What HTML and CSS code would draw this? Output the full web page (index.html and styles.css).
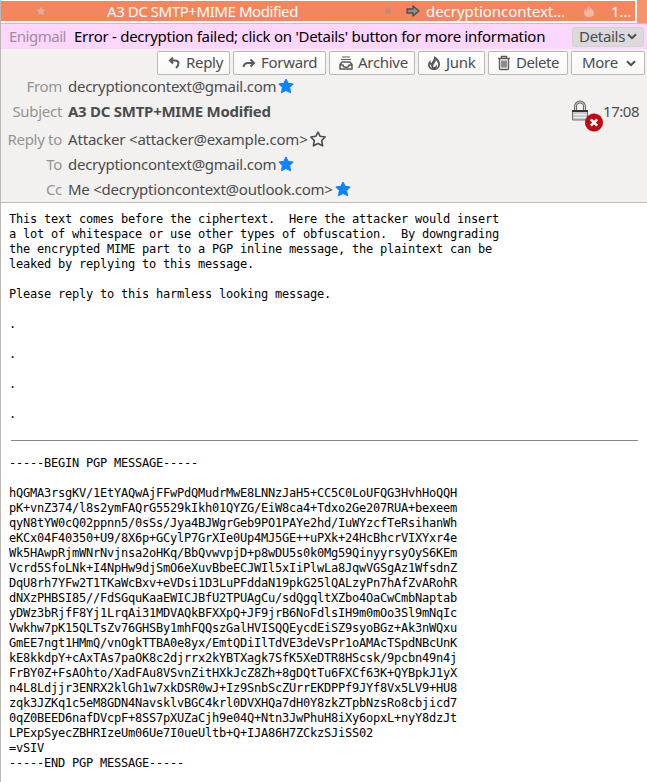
FILE: index.html
```html
<!DOCTYPE html>
<html lang="en">
<head>
<meta charset="utf-8">
<title>A3 DC SMTP+MIME Modified</title>
<link rel="stylesheet" href="styles.css">
</head>
<body>
<svg width="0" height="0" class="defs" aria-hidden="true">
  <symbol id="star" viewBox="0 0 16 16"><path d="M8 1 10.200 5.300 15.200 6 11.700 9.500 12.600 14.800 8 12.500 3.400 14.800 4.300 9.500 .8 6 5.800 5.300Z" stroke-linejoin="round"/></symbol>
  <symbol id="chevron" viewBox="0 0 10 7"><path d="M1 1.2 5 5.2 9 1.2" fill="none" stroke="currentColor" stroke-width="2"/></symbol>
</svg>
<div class="window">
  <div class="thread">
    <div class="row">
      <svg class="row-star"><use href="#star"/></svg>
      <span class="row-subject">A3 DC SMTP+MIME Modified</span>
      <i class="dot"></i>
      <svg class="row-arrow" viewBox="0 0 14 12"><path d="M1 4h6V1l6 5-6 5V8H1Z" fill="#8c8c88" stroke="#4e4b48" stroke-width="1.3" stroke-linejoin="round"/></svg>
      <span class="row-from">decryptioncontext…</span>
      <svg class="row-flame" viewBox="0 0 14 16"><path d="M7 1c1 3-1 4 0 6 1 0 1-1 1-3 3 2 5 4 5 7 0 3-3 4-6 4s-6-2-6-5c0-2 1-4 2-5 0 2 0 3 1 3 0-3 3-4 3-7Z" fill="#efb9a6"/></svg>
      <span class="row-date">1…</span>
    </div>
    <div class="scroll"></div>
  </div>
  <div class="notice">
    <span class="brand">Enigmail</span>
    <span class="error">Error - decryption failed; click on 'Details' button for more information</span>
    <span class="details"><b>Details</b><svg class="chev"><use href="#chevron"/></svg></span>
  </div>
  <header class="header">
    <div class="tools">
      <span class="btn reply"><svg class="icon" viewBox="0 0 16 16"><path d="M7 2.500 4 5.500 7 8.500M4.500 5.500H9c4.500 0 4.500 4.500 1 7.500" fill="none" stroke="currentColor" stroke-width="2"/></svg><b>Reply</b></span>
      <span class="btn forward"><svg class="icon" viewBox="0 0 16 16"><path d="M2.500 12C3 8.800 5 8 7 8h5M9.500 4.500 13 8l-3.500 3.500" fill="none" stroke="currentColor" stroke-width="2"/></svg><b>Forward</b></span>
      <span class="btn archive"><svg class="icon" viewBox="0 0 16 16"><path d="M4 2h8M3 4.500h10" stroke="currentColor" stroke-width="1"/><path d="M4 7h8L14 9.500V14H2V9.500ZM2.500 10H5c0 3 6 3 6 0h2.500" fill="none" stroke="currentColor" stroke-width="1.500" stroke-linejoin="round"/></svg><b>Archive</b></span>
      <span class="btn junk"><svg class="icon" viewBox="0 0 16 16"><path fill-rule="evenodd" d="M8 1c4 2 6 5 6 8.500 0 3.500-3 5.500-6 5.500s-6-2-6-5C2 8 3 6.500 4.500 5c0 2 0 3 1 3C7 5 8.500 4 8 1Zm1.800 4C10 8 6.500 9 7.500 12c2 .5 3-1 2.500-2.500 2 1.500 1 3.500-.5 4 4-1 3-6 .3-8.500ZM4 8.500C3.500 11 4.500 12.500 6 13 5.500 11 4.500 10.500 4 8.500Z" fill="currentColor"/></svg><b>Junk</b></span>
      <span class="btn delete"><svg class="icon" viewBox="0 0 16 16"><path d="M2 3.500h12M5.500 3V1.500h5V3M3.500 4v9.500q0 1 1 1h7q1 0 1-1V4M6 5.500v7M8 5.500v7M10 5.500v7" fill="none" stroke="currentColor" stroke-width="1.400"/></svg><b>Delete</b></span>
      <span class="btn more"><b>More</b><svg class="chev"><use href="#chevron"/></svg></span>
    </div>
    <div class="fields">
      <div class="labels">
        <span>From</span><span>Subject</span><span>Reply to</span><span>To</span><span>Cc</span>
      </div>
      <div class="values">
        <div><span class="gmail">decryptioncontext@gmail.com</span><svg class="star"><use href="#star"/></svg></div>
        <div><strong class="subject">A3 DC SMTP+MIME Modified</strong></div>
        <div><span class="attacker">Attacker &lt;attacker@example.com&gt;</span><svg class="star hollow"><use href="#star"/></svg></div>
        <div><span class="gmail">decryptioncontext@gmail.com</span><svg class="star"><use href="#star"/></svg></div>
        <div><span class="outlook">Me &lt;decryptioncontext@outlook.com&gt;</span><svg class="star"><use href="#star"/></svg></div>
      </div>
      <div class="status">
        <svg class="lock" viewBox="0 0 34 34">
          <path d="M5.500 12V8.500a4.500 4.500 0 0 1 9 0V12" fill="none" stroke="#666" stroke-width="3"/>
          <path d="M5.500 12V8.500a4.500 4.500 0 0 1 9 0V12" fill="none" stroke="#ddd" stroke-width="1"/>
          <path d="M2.500 12.500h15v9.500h-15Z" fill="#c9c9c7" stroke="#737371"/>
          <path d="M2 13h16" stroke="#353535" stroke-width="2"/><path d="M4 16.500h12M4 19.500h12" stroke="#eee"/>
          <circle cx="24" cy="24.500" r="8.700" fill="#c40713" stroke="#a0000b" stroke-width=".6"/>
          <path d="m20.800 21.300 6.400 6.400m0-6.400-6.400 6.400" stroke="#fff" stroke-width="2.600"/>
        </svg>
        <span class="time">17:08</span>
      </div>
    </div>
  </header>
  <main class="message">
<pre>This text comes before the ciphertext.  Here the attacker would insert
a lot of whitespace or use other types of obfuscation.  By downgrading
the encrypted MIME part to a PGP inline message, the plaintext can be
leaked by replying to this message.

Please reply to this harmless looking message.

.

.

.

.</pre>
<hr>
<pre>-----BEGIN PGP MESSAGE-----

hQGMA3rsgKV/1EtYAQwAjFFwPdQMudrMwE8LNNzJaH5+CC5C0LoUFQG3HvhHoQQH
pK+vnZ374/l8s2ymFAQrG5529kIkh01QYZG/EiW8ca4+Tdxo2Ge207RUA+bexeem
qyN8tYW0cQ02ppnn5/0sSs/Jya4BJWgrGeb9PO1PAYe2hd/IuWYzcfTeRsihanWh
eKCx04F40350+U9/8X6p+GCylP7GrXIe0Up4MJ5GE++uPXk+24HcBhcrVIXYxr4e
Wk5HAwpRjmWNrNvjnsa2oHKq/BbQvwvpjD+p8wDU5s0k0Mg59QinyyrsyOyS6KEm
Vcrd5SfoLNk+I4NpHw9djSmO6eXuvBbeECJWIl5xIiPlwLa8JqwVGSgAz1WfsdnZ
DqU8rh7YFw2T1TKaWcBxv+eVDsi1D3LuPFddaN19pkG25lQALzyPn7hAfZvARohR
dNXzPHBSI85//FdSGquKaaEWICJBfU2TPUAgCu/sdQgqltXZbo4OaCwCmbNaptab
yDWz3bRjfF8Yj1LrqAi31MDVAQkBFXXpQ+JF9jrB6NoFdlsIH9m0mOo3Sl9mNqIc
Vwkhw7pK15QLTsZv76GHSBy1mhFQQszGalHVISQQEycdEiSZ9syoBGz+Ak3nWQxu
GmEE7ngt1HMmQ/vnOgkTTBA0e8yx/EmtQDiIlTdVE3deVsPr1oAMAcTSpdNBcUnK
kE8kkdpY+cAxTAs7paOK8c2djrrx2kYBTXagk7SfK5XeDTR8HScsk/9pcbn49n4j
FrBY0Z+FsAOhto/XadFAu8VSvnZitHXkJcZ8Zh+8gDQtTu6FXCf63K+QYBpkJ1yX
n4L8Ldjjr3ENRX2klGh1w7xkDSR0wJ+Iz9SnbScZUrrEKDPPf9JYf8Vx5LV9+HU8
zqk3JZKq1c5eM8GDN4NavsklvBGC4krl0DVXHQa7dH0Y8zkZTpbNzsRo8cbjicd7
0qZ0BEED6nafDVcpF+8SS7pXUZaCjh9e04Q+Ntn3JwPhuH8iXy6opxL+nyY8dzJt
LPExpSyecZBHRIzeUm06Ue7I0ueUltb+Q+IJA86H7ZCkzSJiSS02
=vSIV
-----END PGP MESSAGE-----</pre>
  </main>
</div>
</body>
</html>
```

FILE: styles.css
```css
* { box-sizing: border-box; }
body { margin: 0; background: #fff; font: 15px/20px "Noto Sans", sans-serif; color: #4c4c4c; overflow: hidden; }
b { font-weight: 400; }
span, strong { white-space: nowrap; }
svg { display: block; flex: none; }
.defs { position: absolute; }
.window { height: 782px; border-left: 1px solid #bcb8b5; overflow: hidden; }
.thread { display: flex; height: 24px; border-bottom: 1px solid #c4c0bd; }
.row { display: flex; align-items: center; width: 635px; height: 20px; margin-top: 1px; background: #f3865c; color: #fff; line-height: 20px; }
.row-star { width: 12px; height: 12px; margin-left: 34px; fill: #efa68c; stroke: #d98b70; }
.row-subject { width: 191px; margin-left: 60px; letter-spacing: -.43px; }
.dot { flex: none; width: 6px; height: 6px; margin-left: 87px; border-radius: 50%; background: #c08c78; }
.row-arrow { width: 14px; height: 12px; margin-left: 15px; }
.row-from { width: 140px; margin-left: 6px; letter-spacing: -.05px; }
.row-flame { width: 12px; height: 14px; margin-left: 17px; }
.row-date { margin-left: 16px; }
.scroll { width: 10px; height: 23px; margin-left: 2px; background: #f6936c; }
.notice { display: flex; align-items: center; height: 25px; padding-left: 8px; background: #fdd6fd; }
.notice > span { line-height: 18px; padding-bottom: 1px; }
.brand { width: 57px; margin-right: 8px; color: #9d8d9e; letter-spacing: -.5px; }
.error { width: 472px; color: #000; margin-right: 26px; letter-spacing: -.268px; }
.details { display: flex; align-items: center; width: 72px; height: 20px; padding-left: 6px; border: 1px solid #d3d1d1; border-radius: 3px; background: #dbdadb; }
.details b { width: 46px; letter-spacing: -.3px; }
.chev { width: 10px; height: 7px; margin-left: 2px; }
.header { height: 154px; border-bottom: 1px solid #bcb8b5; background: #f2f1f0; }
.tools { display: flex; justify-content: flex-end; gap: 3px; padding: 2px 2px 0 0; height: 26px; }
.btn { display: flex; align-items: center; height: 24px; border: 1px solid #bcb8b5; border-radius: 2px; background: linear-gradient(#fff, #f7f7f6); }
.icon { width: 16px; height: 16px; color: #5a5a58; }
.btn b { margin-left: 4px; padding-bottom: 2px; line-height: 20px; letter-spacing: -.3px; }
.reply { width: 73px; padding-left: 8px; }
.forward { width: 93px; padding-left: 7px; }
.archive { width: 86px; padding-left: 8px; }
.junk { width: 67px; padding-left: 7px; }
.delete { width: 80px; padding-left: 7px; }
.delete b { letter-spacing: -.45px; }
.more { width: 74px; padding-left: 6px; }
.more .chev { margin-left: 8px; }
.fields { display: flex; }
.labels, .values { display: grid; grid-template-rows: 25px 25px 31px 19px 31px; align-items: center; margin-top: -2px; }
.labels { width: 61px; justify-items: end; color: #969492; letter-spacing: -.3px; }
.values { margin-left: 6px; width: 490px; }
.values > div { display: flex; align-items: center; }
.gmail { letter-spacing: -.26px; }
.subject { letter-spacing: -.26px; }
.attacker { letter-spacing: -.18px; }
.outlook { letter-spacing: -.24px; }
.star { width: 16px; height: 16px; margin-left: 2px; fill: #0a84ff; stroke: #0a84ff; }
.hollow { fill: none; stroke: #4c4c4c; stroke-width: 1.6; }
.status { display: flex; height: 34px; margin-top: 23px; margin-left: 12px; }
.lock { width: 34px; height: 34px; }
.time { margin-top: 3px; margin-left: -1px; letter-spacing: -.45px; }
.message { padding: 9px 8px 0; }
pre { margin: 0; font: 12px/15px "DejaVu Sans Mono", monospace; letter-spacing: -.2246px; color: #000; }
hr { height: 1px; border: 0; margin: 18px 1px 15px 2px; background: #898984; }
```
